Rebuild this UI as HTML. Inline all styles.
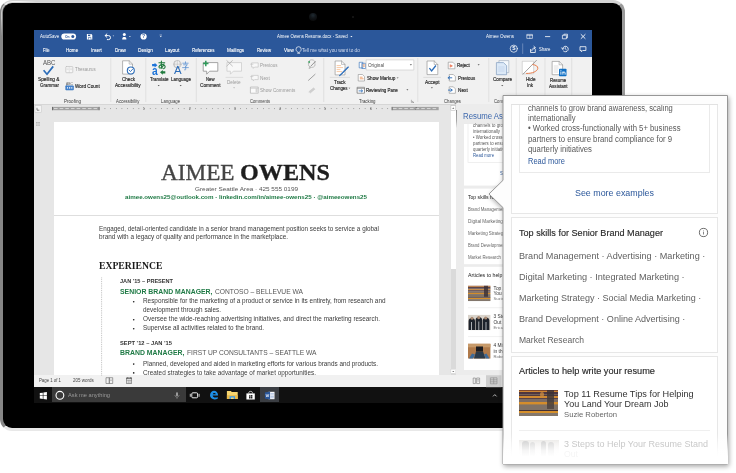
<!DOCTYPE html>
<html><head><meta charset="utf-8"><title>Resume Assistant in Word</title>
<style>
html,body{margin:0;padding:0;}
body{width:736px;height:473px;overflow:hidden;background:#fff;position:relative;font-family:"Liberation Sans",sans-serif;}
.t{position:absolute;white-space:nowrap;line-height:1;transform-origin:0 50%;}
.tx{position:absolute;left:0;top:0;width:736px;height:473px;will-change:transform;}
.a{position:absolute;}
svg{position:absolute;overflow:visible;}
</style></head><body>
<!-- tablet -->
<div class="a" style="left:0;top:0;width:625px;height:431px;box-sizing:border-box;border-style:solid;border-width:3px 3.2px 3.2px 3px;border-color:#d3d3d3 #9b9b9b #e8e8e8 #868686;border-radius:12px;background:#000;"></div>
<div class="a" style="left:0.6px;top:0.6px;width:40px;height:40px;box-sizing:border-box;border-top:1px solid rgba(255,255,255,.75);border-left:1px solid rgba(255,255,255,.55);border-radius:11.5px 0 0 0;-webkit-mask-image:linear-gradient(135deg,#000 0,#000 22%,transparent 45%);"></div>
<!-- camera -->
<div class="a" style="left:308.5px;top:12.5px;width:8px;height:8px;border-radius:50%;background:radial-gradient(circle at 50% 30%,#1f2a31 0,#12161a 40%,#0b0c0d 75%,#000 100%);"></div>
<div class="a" style="left:351.5px;top:15.5px;width:2.5px;height:2.5px;border-radius:50%;background:#1a1a1a;"></div>

<!-- screen -->
<div id="screen" class="a" style="left:32.5px;top:29.5px;width:559.5px;height:373px;background:#e6e6e6;overflow:hidden;">
  <!-- blue title + tabs -->
  <div class="a" style="left:0;top:0;width:100%;height:27px;background:#2b579a;"></div>
  <!-- ribbon -->
  <div class="a" style="left:0;top:27px;width:100%;height:48px;background:#f1f1f1;border-bottom:0.5px solid #d6d6d6;box-sizing:border-box;"></div>
  <!-- page -->
  <div class="a" style="left:21.5px;top:92.5px;width:384.5px;height:260px;background:#fff;"></div>
  <div class="a" style="left:21.5px;top:185.8px;width:384.5px;height:0.8px;background:#dedede;"></div>
  <!-- scrollbar -->
  <div class="a" style="left:423.8px;top:74.5px;width:136px;height:271px;background:#ececec;"></div>
  <div class="a" style="left:418px;top:75px;width:5.2px;height:271px;background:#dadada;"></div>
  <div class="a" style="left:418.2px;top:76.2px;width:4.9px;height:163.3px;background:#fff;"></div>
  <div class="a" style="left:418.2px;top:339.8px;width:4.9px;height:4.2px;background:#fff;"></div>
  <div class="a" style="left:423.5px;top:80px;width:0.8px;height:18px;background:linear-gradient(180deg,#8e8e8e,#a8a8a8 60%,rgba(200,200,200,0));"></div>
  <!-- pane cards -->
  <div class="a" style="left:431.2px;top:94.2px;width:140px;height:246.3px;background:#fff;"></div>
  <!-- status bar -->
  <div class="a" style="left:0;top:345.5px;width:100%;height:12px;background:#f1f1f1;"></div>
  <!-- taskbar -->
  <div class="a" style="left:0;top:357.5px;width:100%;height:16px;background:#111;"></div>
  <div class="a" style="left:19.5px;top:357.5px;width:133.5px;height:15px;background:#3a3a3a;"></div>
  <div class="a" style="left:227.5px;top:357.5px;width:18.5px;height:15px;background:#3a3d42;"></div>
  <div class="a" style="left:0;top:0;width:0.8px;height:100%;background:#000;"></div>
</div>

<!-- icons overlay (page coords) -->
<svg style="left:0;top:0" width="736" height="473" viewBox="0 0 736 473">
 <g fill="none" stroke="#fff" stroke-width="0.8" stroke-linecap="round" stroke-linejoin="round">
  <!-- autosave toggle -->
  <rect x="61.3" y="33.4" width="14.8" height="6.2" rx="3.1" fill="#fff" stroke="none"/>
  <circle cx="72.8" cy="36.5" r="1.5" fill="#2b579a" stroke="none"/>
  <!-- save -->
  <path d="M86.900 34h4.400l1 1v4.600h-5.400z" fill="#fff" stroke="none"/>
  <rect x="88" y="34.600" width="2.800" height="1.500" fill="#2b579a" stroke="none"/>
  <rect x="90" y="34.600" width="0.700" height="1.500" fill="#fff" stroke="none"/>
  <rect x="88" y="37.400" width="3.200" height="2.200" fill="#2b579a" stroke="none"/>
  <rect x="88.500" y="37.900" width="2.200" height="1.700" fill="#fff" stroke="none"/>
  <!-- undo -->
  <path d="M105.2 35.6h3.3a2 2 0 0 1 0 4h-1.2" stroke-width="1"/>
  <path d="M106.9 33.9l-1.8 1.7l1.8 1.7" stroke-width="1"/>
  <path d="M112.6 35.6h1.6l-0.8 1z" fill="#cdd7ea" stroke="none"/>
  <!-- touch -->
  <circle cx="124.3" cy="34.6" r="1.5" fill="#fff" stroke="none"/>
  <path d="M122.2 39.6c0-2 .8-2.6 2.1-2.6s2.1.6 2.1 2.6z" fill="#fff" stroke="none"/>
  <path d="M129 36h1.8l-0.9 1.1z" fill="#fff" stroke="none"/>
  <!-- help -->
  <circle cx="143.6" cy="36.5" r="3.1" fill="#fff" stroke="none"/>
  <!-- qat arrow -->
  <path d="M159.9 36.1h1.8l-0.9 1.1z" fill="#fff" stroke="none"/>
  <path d="M160 35h1.6" stroke-width="0.5"/>
  <!-- title dropdown -->
  <path d="M350.3 36h2.2l-1.1 1.3z" fill="#fff" stroke="none"/>
  <!-- ribbon display -->
  <rect x="527.2" y="34.4" width="5.2" height="4" stroke-width="0.6"/>
  <path d="M527.2 35.500h5.2M529.8 35.500v2.900" stroke-width="0.500"/>
  <!-- min / restore / close -->
  <path d="M545.4 36.6h4.4" stroke-width="0.8"/>
  <rect x="562.8" y="35.2" width="3.6" height="3.6" stroke-width="0.7"/>
  <path d="M563.9 35.2v-1h3.6v3.6h-1" stroke-width="0.7"/>
  <path d="M581.1 34.5l4 4M585.1 34.5l-4 4" stroke-width="0.9"/>
  <!-- lightbulb -->
  <path d="M296.6 52.2c-1.2-1-1.7-1.9-1.7-2.9a2.6 2.6 0 0 1 5.200 0c0 1-.5 1.900-1.700 2.900z" transform="translate(1.1 0)" stroke-width="0.7"/>
  <path d="M297.700 53.300h2" stroke-width="0.7"/>
  <!-- S circle -->
  <circle cx="513.8" cy="48.7" r="3.6" stroke-width="0.7"/>
  <path d="M522.7 43.800v9.700" stroke="#8fa6cf" stroke-width="0.600"/>
  <!-- share -->
  <path d="M530.5 49.500v3h4.800v-3" stroke-width="0.800"/>
  <path d="M531.800 50.800c.2-2 1.200-3 3.200-3.100M533.900 46.300l1.500 1.400l-1.500 1.400" stroke-width="0.800"/>
  <!-- history -->
  <path d="M562.600 49a2.800 2.800 0 1 1 .9 2.100" stroke-width="0.800"/>
  <path d="M561.600 47.800l1 1.500l1.500-.9" stroke-width="0.700"/>
  <path d="M565.400 47.500v1.700l1.100.7" stroke-width="0.600"/>
  <!-- comment -->
  <path d="M580.400 46.700h5.500v3.800h-3.200l-1.300 1.300v-1.300h-1z" stroke-width="0.800"/>
 </g>
</svg>

<!-- ribbon icons (page coords) -->
<svg style="left:0;top:0" width="736" height="473" viewBox="0 0 736 473">
 <!-- separators -->
 <g stroke="#d9d9d9" stroke-width="0.7">
  <path d="M110.8 58v44M145.8 58v44M196.300 58v44M323.700 58v44M417.800 58v44M488.800 58v44M516.200 58v44M545 58v44M571.700 58v44"/>
  <path d="M225.600 77.400h17.500M329.800 77.400h20.200M423.300 77.400h17.700" stroke="#cfcfcf" stroke-width="0.600"/>
 </g>
 <g fill="none" stroke-linecap="round" stroke-linejoin="round">
  <!-- spelling check -->
  <path d="M43.600 70.300l3.400 3.900l6.200-7.800" stroke="#2b6cb8" stroke-width="1.700" stroke-linecap="butt" stroke-linejoin="miter"/>
  <!-- thesaurus (disabled) -->
  <rect x="65.800" y="66.500" width="7" height="6.200" rx="0.600" stroke="#c2c2c2" stroke-width="0.700" fill="#f7f7f7"/>
  <path d="M69.300 66.500v6.200M67 68.200h1.300M67 69.600h1.300M70.500 68.200h1.300M70.500 69.600h1.300" stroke="#cfcfcf" stroke-width="0.500"/>
  <!-- word count -->
  <rect x="65.700" y="85.800" width="7.800" height="4.200" rx="0.500" fill="#4a86cf" stroke="#2b6cb8" stroke-width="0.500"/>
  <path d="M67 87.900h1M69 87.900h1.200M71.200 87.900h1.100" stroke="#fff" stroke-width="1.300" stroke-linecap="butt"/>
  <!-- check accessibility doc -->
  <path d="M123 60.800h6.200l3.300 3.300v10h-9.500z" fill="#fff" stroke="#9a9a9a" stroke-width="0.700"/>
  <path d="M129.200 60.800v3.300h3.300" stroke="#9a9a9a" stroke-width="0.600"/>
  <circle cx="130.800" cy="70.500" r="3.500" fill="#fff" stroke="#2b6cb8" stroke-width="1.100"/>
  <path d="M129 70l1.500 1.600l2.300-2.600" stroke="#2b6cb8" stroke-width="0.900"/>
  <!-- translate -->
  <path d="M152.100 64h2.500v-1.200l2.800 2.350l-2.800 2.350v-1.200h-2.500z" fill="#1e74d8" stroke="none"/>
  <path d="M165.300 71.200h-2.500v-1.200l-2.800 2.350l2.800 2.350v-1.200h2.500z" fill="#1f7a3d" stroke="none"/>
  <g transform="translate(157.9 60.700)" stroke="#1f7a3d" stroke-width="1.100" fill="none"><path d="M1 2.100H6.800"/><path d="M3.500 0.400C3.200 3 3.400 5.600 4.100 7.800"/><path d="M6.100 3.300C5.100 6.600 2.600 8.100 1.300 6.900C0.300 5.600 2.600 3.700 5.100 4C7.600 4.300 8.100 6.900 5.700 8"/></g>
  <!-- language: globe + A + glyph -->
  <circle cx="177.300" cy="64.200" r="3.700" stroke="#ababab" stroke-width="0.600"/>
  <path d="M173.600 64.200h7.400M177.300 60.500v7.400M175.300 61.200c-1.100 2-1.100 4 0 6M179.300 61.200c1.100 2 1.100 4 0 6" stroke="#b5b5b5" stroke-width="0.500"/>
  <path d="M182.800 63.200h5.400M185.500 61.800v1.400M183.600 64.800h3.800l-1.600 1.500M185.700 66.300v3c0 .6-.5.700-1.200.5M182.600 67.600h5.800" stroke="#4a86cf" stroke-width="0.700"/>
  <!-- new comment -->
  <path d="M203.600 62.600h14.200v8.600h-8.200l-2.900 3v-3h-3.100z" fill="#fff" stroke="#8f8f8f" stroke-width="0.800"/>
  <path d="M205.800 60.800v5.400M203.100 63.500h5.400" stroke="#2e9a5a" stroke-width="1.500" stroke-linecap="butt"/>
  <!-- delete comment (disabled) -->
  <path d="M227.300 62.600h14.200v8.600h-8.200l-2.900 3v-3h-3.100z" fill="#f8f8f8" stroke="#c9c9c9" stroke-width="0.700"/>
  <path d="M226.800 60.600l5.600 5.400M232.400 60.600l-5.600 5.400" stroke="#a8a8a8" stroke-width="0.700"/>
  <!-- previous / next / show comments (disabled) -->
  <path d="M252 62.900h6.200v4.200h-3.600l-1.300 1.300v-1.300h-1.300z" fill="#f8f8f8" stroke="#bdbdbd" stroke-width="0.600"/>
  <path d="M252 75.400h6.200v4.200h-3.600l-1.300 1.300v-1.300h-1.300z" fill="#f8f8f8" stroke="#bdbdbd" stroke-width="0.600"/>
  <path d="M250.600 64.200h2.400M250.600 76.600h2.400" stroke="#bdbdbd" stroke-width="0.600"/>
  <rect x="250.800" y="87" width="7.400" height="6.200" fill="#fbfbfb" stroke="#b5b5b5" stroke-width="0.700"/>
  <rect x="255.600" y="88.600" width="2" height="4" fill="#d5d5d5" stroke="none"/>
  <path d="M250.800 88.200h7.400" stroke="#b5b5b5" stroke-width="0.600"/>
  <!-- ink comment / pen / eraser -->
  <path d="M308.600 63.600a3.400 2.700 0 1 0 6.200 0a3.400 2.700 0 1 0-6.200 0M309.600 67l-.6 1.600l1.700-.9" stroke="#9c9c9c" stroke-width="0.600"/>
  <path d="M311 66l4.200-4.400" stroke="#7d7d7d" stroke-width="0.800"/>
  <circle cx="309.200" cy="62" r="0.900" fill="#3aa35f" stroke="none"/>
  <path d="M308.500 80.300l6.600-6" stroke="#8c8c8c" stroke-width="0.800"/>
  <path d="M309 91.600l4.600-3.800l1.300 1.400l-4.600 3.800z" fill="#cfcfcf" stroke="#c2c2c2" stroke-width="0.400"/>
  <!-- track changes -->
  <path d="M335.500 61h6l3.500 3.400v10.500h-9.500z" fill="#fff" stroke="#9a9a9a" stroke-width="0.700"/>
  <path d="M341.500 61v3.400h3.500" stroke="#9a9a9a" stroke-width="0.600"/>
  <path d="M337 65.600h3.600M337 67.600h5.600M337 69.600h3M337 71.600h4.600" stroke="#f0a66a" stroke-width="0.600"/>
  <path d="M347.800 66.800l-7.200 7.400l-1.400 1.700l2-1.100l7.200-7.400z" fill="#2b6cb8" stroke="#2b6cb8" stroke-width="0.700"/>
  <!-- display for review icon -->
  <path d="M359.600 62.300h3.200v5.600h-3.200zM362.200 63.300h3.400v5.200h-3.400z" fill="#fff" stroke="#2b6cb8" stroke-width="0.600"/>
  <path d="M363 64.800h1.800M363 66.200h1.800" stroke="#e8803a" stroke-width="0.600"/>
  <rect x="366.500" y="59.900" width="47.300" height="10.100" fill="#fff" stroke="#c6c6c6" stroke-width="0.600"/>
  <path d="M409.800 64.300h2.200l-1.100 1.300z" fill="#555" stroke="none"/>
  <!-- show markup -->
  <path d="M358.600 74.500h3.800l2.100 2.100v4.400h-5.900z" fill="#fff" stroke="#8f8f8f" stroke-width="0.600"/>
  <path d="M360.200 77.200h2M360.200 78.800h3" stroke="#e8803a" stroke-width="0.700"/>
  <path d="M396.600 77.400h2l-1 1.200z" fill="#555" stroke="none"/>
  <!-- reviewing pane -->
  <rect x="357.500" y="87.300" width="7" height="5.900" fill="#fff" stroke="#6d6d6d" stroke-width="0.700"/>
  <path d="M357.500 88.600h7" stroke="#6d6d6d" stroke-width="0.600"/>
  <path d="M359 90.900h3.400M361.300 89.800l1.200 1.100l-1.200 1.100" stroke="#2b6cb8" stroke-width="0.800"/>
  <path d="M406.400 89.300h2l-1 1.200z" fill="#555" stroke="none"/>
  <path d="M411.400 100.200v2.200h2.200M412.300 101.300l1.300 1.100" stroke="#777" stroke-width="0.500"/>
  <!-- accept -->
  <path d="M427.400 61h6.800l3.600 3.500v10.100h-10.400z" fill="#fff" stroke="#9a9a9a" stroke-width="0.700"/>
  <path d="M434.200 61v3.500h3.600" stroke="#9a9a9a" stroke-width="0.600"/>
  <path d="M429.400 68.200l2.200 2.700l4.300-5.400" stroke="#2b6cb8" stroke-width="1.300" stroke-linecap="butt" stroke-linejoin="miter"/>
  <path d="M430.900 87.300h2l-1 1.200z" fill="#555" stroke="none"/>
  <!-- reject / previous / next docs -->
  <path d="M448.600 62.200h4.200l2.100 2.100v4.500h-6.300z" fill="#fff" stroke="#8f8f8f" stroke-width="0.600"/>
  <path d="M450.300 64.700l2.200 1.200l-2.200 1.200z" fill="#e8603a" stroke="#e8603a" stroke-width="0.400"/>
  <path d="M477.600 64.300h2.100l-1.050 1.300z" fill="#555" stroke="none"/>
  <path d="M449.600 74.500h3.700l2.100 2.100v4.400h-5.800z" fill="#fff" stroke="#8f8f8f" stroke-width="0.600"/>
  <path d="M448.200 77.800h3.600M449.600 76.500l-1.500 1.300l1.500 1.300" stroke="#2b6cb8" stroke-width="0.900"/>
  <path d="M449.600 86.800h3.700l2.100 2.100v4.400h-5.800z" fill="#fff" stroke="#8f8f8f" stroke-width="0.600"/>
  <path d="M448.400 90.100h3.600M450.700 88.800l1.500 1.300l-1.500 1.300" stroke="#2b6cb8" stroke-width="0.900"/>
  <!-- compare -->
  <path d="M499.300 60.600h9.500v12h-9.500z" fill="#f4f8fc" stroke="#9aa9bb" stroke-width="0.600"/>
  <path d="M496.800 62.600h6.600l3.200 3v9.100h-9.800z" fill="#dce9f7" stroke="#7f9cc0" stroke-width="0.700"/>
  <path d="M498.600 67h5.600M498.600 69h5.600M498.600 71h5.600" stroke="#b9cfe9" stroke-width="0.600"/>
  <path d="M501.200 85h2.100l-1.050 1.300z" fill="#555" stroke="none"/>
  <!-- hide ink -->
  <path d="M522.600 61.300h11v12.500h-11z" fill="#fff" stroke="#b9b9b9" stroke-width="0.500"/>
  <path d="M536.400 60.400l-13.400 13.800" stroke="#7a7a7a" stroke-width="0.700"/>
  <path d="M532.800 64.600c3.300.3 5.200 1.800 5 3.800c-.3 2.800-5.300 5.200-11.300 5" stroke="#e8703a" stroke-width="0.900"/>
  <!-- resume assistant -->
  <path d="M552.500 61.400h6.600l3.500 3.400v9.900h-10.100z" fill="#fff" stroke="#9a9a9a" stroke-width="0.700"/>
  <path d="M559.100 61.400v3.400h3.500" stroke="#9a9a9a" stroke-width="0.600"/>
  <path d="M554.200 66h4M554.200 68h4M554.200 70h3.400M554.200 72h3.400" stroke="#c9c9c9" stroke-width="0.600"/>
  <rect x="559" y="68.800" width="7.500" height="7.400" rx="0.800" fill="#0f6fc4" stroke="none"/>
  <path d="M560.900 71.500v3.200M562.900 74.700v-3.200M562.900 73c0-1.300 2.200-1.600 2.200 0v1.700" stroke="#fff" stroke-width="0.900" stroke-linecap="butt"/>
  <circle cx="560.900" cy="70.300" r="0.550" fill="#fff" stroke="none"/>
  <!-- small dropdown arrows under translate/language/delete -->
  <path d="M157.700 85h2l-1 1.200zM179.700 85h2l-1 1.200z" fill="#555" stroke="none"/>
  <path d="M233.100 87.300h2l-1 1.200z" fill="#b5b5b5" stroke="none"/>
  <path d="M348.500 87.700h1.800l-.9 1.100z" fill="#555" stroke="none"/>
 </g>
</svg>

<!-- ruler, doc furniture, status/taskbar icons, pane (page coords) -->
<svg style="left:0;top:0" width="736" height="473" viewBox="0 0 736 473">
 <!-- ruler -->
 <rect x="35" y="105.700" width="6.200" height="6.500" fill="#f7f7f7" stroke="#c4c4c4" stroke-width="0.500"/>
 <path d="M37 107.800v2.400h2.400" fill="none" stroke="#555" stroke-width="0.700"/>
 <rect x="52.200" y="106.900" width="47.300" height="3.300" fill="#a2a2a2"/><rect x="52.200" y="106.900" width="0.800" height="3.300" fill="#5a5a5a"/><rect x="98.700" y="106.900" width="0.800" height="3.300" fill="#6a6a6a"/>
 <rect x="391.700" y="106.900" width="47" height="3.300" fill="#a2a2a2"/><rect x="391.700" y="106.900" width="0.800" height="3.300" fill="#6a6a6a"/>
 <path d="M54 108.550h44" stroke="#d9d9d9" stroke-width="1" stroke-dasharray="3.600 2.050"/>
 <path d="M393 108.550h44" stroke="#d9d9d9" stroke-width="1" stroke-dasharray="3.600 2.050"/>
 <path d="M104.650 108.550h286" stroke="#6a6a6a" stroke-width="0.900" stroke-dasharray="0.600 5.056"/>
 <!-- nav icon -->
 <path d="M36 121.900h1.700v1h-1.700zM38.200 121.900h1.700v1h-1.700zM36 123.400h1.700v1h-1.700zM38.200 123.400h1.700v1h-1.700zM36 124.900h1.700v.8h-1.700zM38.200 124.900h1.700v.8h-1.700z" fill="#b5b5b5"/>
 <!-- dotted vertical line in doc -->
 <path d="M101.600 277.500v98" stroke="#9a9a9a" stroke-width="0.700" stroke-dasharray="0.800 1"/>
 <!-- bullets -->
 <circle cx="133.700" cy="301.8" r="0.800" fill="#1a1a1a"/><circle cx="133.700" cy="319.8" r="0.800" fill="#1a1a1a"/><circle cx="133.700" cy="328.8" r="0.800" fill="#1a1a1a"/><circle cx="133.700" cy="364.1" r="0.800" fill="#1a1a1a"/><circle cx="133.700" cy="372.9" r="0.800" fill="#1a1a1a"/>
 <!-- scrollbar arrows -->
 <rect x="450.900" y="105.600" width="4.700" height="5" fill="#fff" stroke="#b3b3b3" stroke-width="0.500"/>
 <path d="M452.200 108.700l1.050-1.300l1.050 1.300z" fill="#555"/>
 <rect x="450.900" y="369.400" width="4.700" height="4" fill="#fff" stroke="#c9c9c9" stroke-width="0.400"/>
 <path d="M452.200 370.900l1.050 1.200l1.050-1.200z" fill="#555"/>
 <!-- status bar icons -->
 <g fill="none" stroke="#666" stroke-width="0.600">
  <path d="M106 377.700h3.300v5.800h-3.300zM109.300 377.700h3.400v5.800h-3.400z"/>
  <path d="M110.300 379.500l1.400 1.400M111.700 379.500l-1.400 1.400" stroke="#888" stroke-width="0.500"/>
  <rect x="126.500" y="378.600" width="5.200" height="4.800"/>
  <path d="M126.500 380.200h5.200M128.200 380.200v3.200M130 380.200v3.200" stroke-width="0.500"/>
  <rect x="126.500" y="377.300" width="2.200" height="1.300" fill="#555" stroke="none"/>
  <rect x="129.400" y="377.300" width="2.300" height="1.300" fill="#555" stroke="none"/>
  <!-- right view icons -->
  <rect x="486" y="375.200" width="15.500" height="12" fill="#cfcfcf" stroke="none"/>
  <path d="M473.200 378h2.200v5.600h-2.200zM476.600 378h3v5.600h-3zM477.400 379.600h1.400M477.400 381h1.400" stroke="#777" stroke-width="0.600"/>
  <path d="M490.400 377.800h6.600v6h-6.600zM490.400 379.800h6.600M490.400 381.800h6.600M493.700 377.800v6" stroke="#8a8a8a" stroke-width="0.600"/>
 </g>
 <!-- taskbar icons -->
 <g>
  <path d="M39.800 393.100l3-.45v2.850h-3zM43.400 392.550l3.500-.55v3.500h-3.500zM39.800 396.100h3v2.850l-3-.45zM43.400 396.100h3.500v3.500l-3.500-.55z" fill="#fff"/>
  <circle cx="59.900" cy="395.300" r="3.900" fill="none" stroke="#fff" stroke-width="1.100"/>
  <!-- mic -->
  <rect x="176" y="392.200" width="2" height="4" rx="1" fill="#9c9c9c"/>
  <path d="M174.900 395c0 2.800 4.200 2.800 4.200 0M177 397.200v1.600" fill="none" stroke="#9c9c9c" stroke-width="0.600"/>
  <!-- task view -->
  <rect x="191.800" y="392.800" width="5.800" height="5" rx="1" fill="none" stroke="#fff" stroke-width="0.900"/>
  <path d="M190.300 393.800v3M199.100 393.800v3" stroke="#fff" stroke-width="0.800"/>
  <!-- edge -->
  <path d="M210 395.600c0-6.400 8.200-6.200 8.100 0h-5.400c.2 2.200 3 2.500 5 1.400v1.700c-3.500 1.700-7.600.3-7.700-3.100zM212.800 394.300h3c-.1-1.900-2.800-1.900-3 0z" fill="#1e8fe6" fill-rule="evenodd"/>
  <!-- folder -->
  <path d="M226.900 391h4l.9 1h5.900v7h-10.800z" fill="#f7d56f"/>
  <path d="M226.900 395.200h10.800v3.800h-10.800z" fill="#e9b94a"/>
  <path d="M229.600 396.200h5.400v2.800h-5.400z" fill="#3c9be9"/>
  <path d="M230.900 397.500h2.800v1.500h-2.800z" fill="#f7d56f"/>
  <!-- store -->
  <path d="M246.400 393.400h8.400v6.100h-8.400z" fill="#fff"/>
  <path d="M248.800 393.400v-.9c0-1.500 3.600-1.500 3.600 0v.9" fill="none" stroke="#fff" stroke-width="0.700"/>
  <path d="M249 395.300h1.400v1.400h-1.400zM250.800 395.100h1.600v1.600h-1.600zM249 397h1.400v1.400h-1.400zM250.800 397h1.600v1.600h-1.600z" fill="#222"/>
  <!-- word -->
  <path d="M268.500 391.800h6v7.400h-6z" fill="#fff"/>
  <path d="M270.500 393.400h3.400M270.500 394.900h3.400M270.500 396.400h3.400M270.500 397.800h3.400" stroke="#7f9cd0" stroke-width="0.600"/>
  <path d="M264.900 392.400l5.200-1v8.200l-5.200-1z" fill="#2b579a"/>
  <path d="M266 394l.7 3l.7-2.400l.7 2.400l.7-3" fill="none" stroke="#fff" stroke-width="0.550"/>
  <!-- tray caret -->
  <path d="M493 396.400l1.800-1.800l1.800 1.800" fill="none" stroke="#ddd" stroke-width="0.800"/>
 </g>
 <!-- pane: card separators & nested box -->
 <g>
  <rect x="463.700" y="185.600" width="128" height="3" fill="#ececec"/>
  <rect x="463.700" y="264.200" width="128" height="2.600" fill="#ececec"/>
  <rect x="468" y="118" width="110" height="44.300" fill="none" stroke="#e4e4e4" stroke-width="0.600"/>
  <rect x="463.700" y="116" width="128" height="7.700" fill="#ececec"/>
  <path d="M468 307.700h110M468 336.600h110" stroke="#e6e6e6" stroke-width="0.600"/>
 </g>
 <!-- pane thumbs -->
 <g>
  <rect x="468" y="285.80" width="22.4" height="0.73" fill="#8a4e2c"/>
  <rect x="468" y="286.48" width="22.4" height="0.67" fill="#ee9a32"/>
  <rect x="468" y="287.10" width="22.4" height="1.01" fill="#4a3540"/>
  <rect x="468" y="288.07" width="22.4" height="0.73" fill="#756a66"/>
  <rect x="468" y="288.75" width="22.4" height="0.56" fill="#4e3a42"/>
  <rect x="468" y="289.26" width="22.4" height="1.01" fill="#f0a030"/>
  <rect x="468" y="290.22" width="22.4" height="1.01" fill="#57454e"/>
  <rect x="468" y="291.19" width="22.4" height="1.75" fill="#857a70"/>
  <rect x="468" y="292.89" width="22.4" height="1.24" fill="#f5a528"/>
  <rect x="468" y="294.08" width="22.4" height="3.40" fill="#8a8272"/>
  <rect x="468" y="297.43" width="22.4" height="0.62" fill="#3c2c32"/>
  <rect x="468" y="297.99" width="22.4" height="1.18" fill="#f8a828"/>
  <rect x="468" y="299.13" width="22.4" height="1.92" fill="#8e887c"/>
  <rect x="484" y="285.8" width="4" height="11" fill="#2e2a33" opacity=".8"/>
  <rect x="468" y="285.8" width="22.4" height="15.2" fill="#5f3c37" opacity=".22"/>
  <rect x="468" y="314.900" width="22.400" height="15.200" fill="#d9d3cb"/>
  <path d="M468.600 330.100v-9c0-4 6.400-4 6.400 0v9zM475.600 330.100v-10c0-4 6.600-4 6.600 0v10zM482.800 330.100v-9.500c0-4 6.600-4 6.600 0v9.500z" fill="#1d222b"/>
  <path d="M471.500 322v8M478.800 321.500v8.500M486 322v8" stroke="#cfd3d8" stroke-width="0.800"/>
  <circle cx="472" cy="318.300" r="1.500" fill="#a98a72"/><circle cx="478.700" cy="317.600" r="1.600" fill="#a98a72"/><circle cx="485.700" cy="318" r="1.600" fill="#a98a72"/>
  <rect x="468" y="343.800" width="22.400" height="14.700" fill="#b07a4a"/>
  <path d="M468 343.800h22.400v3.500h-22.400z" fill="#c79a6a"/>
  <path d="M474 358.500l2-7h7l2.500 7z" fill="#2a3a4a"/>
  <rect x="476" y="346.500" width="7" height="5" fill="#1b1b1f"/>
  <path d="M469 358.500l3-5l3 1l-2 4zM489.500 358.500l-3-5l-2.500 1l2 4z" fill="#3c6a9a"/>
 </g>
</svg>

<div class="tx">
<span class="t" style="font-size:5.5px;color:#fff;top:34px;left:39.80px;transform:scaleX(0.8047);">AutoSave</span>
<span class="t" style="font-size:5.5px;color:#fff;top:34px;left:277.40px;transform:scaleX(0.7855);">Aimee Owens Resume.docx - Saved</span>
<span class="t" style="font-size:5.5px;color:#fff;top:34px;left:486.00px;transform:scaleX(0.8175);">Aimee Owens</span>
<span class="t" style="font-size:5.3px;color:#fff;top:48px;-webkit-text-stroke:0.1px #fff;left:43.10px;transform:scaleX(0.7722);">File</span>
<span class="t" style="font-size:5.3px;color:#fff;top:48px;-webkit-text-stroke:0.1px #fff;left:65.80px;transform:scaleX(0.8628);">Home</span>
<span class="t" style="font-size:5.3px;color:#fff;top:48px;-webkit-text-stroke:0.1px #fff;left:91.20px;transform:scaleX(0.8151);">Insert</span>
<span class="t" style="font-size:5.3px;color:#fff;top:48px;-webkit-text-stroke:0.1px #fff;left:114.75px;transform:scaleX(0.8808);">Draw</span>
<span class="t" style="font-size:5.3px;color:#fff;top:48px;-webkit-text-stroke:0.1px #fff;left:137.75px;transform:scaleX(0.9030);">Design</span>
<span class="t" style="font-size:5.3px;color:#fff;top:48px;-webkit-text-stroke:0.1px #fff;left:165.00px;transform:scaleX(0.8927);">Layout</span>
<span class="t" style="font-size:5.3px;color:#fff;top:48px;-webkit-text-stroke:0.1px #fff;left:191.55px;transform:scaleX(0.8304);">References</span>
<span class="t" style="font-size:5.3px;color:#fff;top:48px;-webkit-text-stroke:0.1px #fff;left:226.70px;transform:scaleX(0.8849);">Mailings</span>
<span class="t" style="font-size:5.3px;color:#fff;top:48px;-webkit-text-stroke:0.1px #fff;left:257.10px;transform:scaleX(0.8058);">Review</span>
<span class="t" style="font-size:5.3px;color:#fff;top:48px;-webkit-text-stroke:0.1px #fff;left:284.10px;transform:scaleX(0.8604);">View</span>
<span class="t" style="font-size:5.3px;color:#d5def0;top:48px;left:302.40px;transform:scaleX(0.8841);">Tell me what you want to do</span>
<span class="t" style="font-size:5.6px;color:#fff;top:47px;left:539.40px;transform:scaleX(0.7565);">Share</span>
<span class="t" style="font-size:4.2px;color:#2b579a;top:35px;font-weight:bold;left:65.00px;transform:scaleX(0.7893);">On</span>
<span class="t" style="font-size:6.3px;color:#555;top:60px;left:42.75px;transform:scaleX(0.9650);">ABC</span>
<span class="t" style="font-size:5.4px;color:#2b2b2b;top:77px;-webkit-text-stroke:0.18px #2b2b2b;left:38.25px;transform:scaleX(0.8855);">Spelling &amp;</span>
<span class="t" style="font-size:5.4px;color:#2b2b2b;top:83px;-webkit-text-stroke:0.18px #2b2b2b;left:39.50px;transform:scaleX(0.8346);">Grammar</span>
<span class="t" style="font-size:5.4px;color:#9a9a9a;top:67px;left:75.30px;transform:scaleX(0.8128);">Thesaurus</span>
<span class="t" style="font-size:5.4px;color:#2b2b2b;top:84px;-webkit-text-stroke:0.18px #2b2b2b;left:75.30px;transform:scaleX(0.8615);">Word Count</span>
<span class="t" style="font-size:5.4px;color:#383838;top:99px;left:63.50px;transform:scaleX(0.8467);">Proofing</span>
<span class="t" style="font-size:5.4px;color:#2b2b2b;top:77px;-webkit-text-stroke:0.18px #2b2b2b;left:121.50px;transform:scaleX(0.8507);">Check</span>
<span class="t" style="font-size:5.4px;color:#2b2b2b;top:83px;-webkit-text-stroke:0.18px #2b2b2b;left:115.25px;transform:scaleX(0.8685);">Accessibility</span>
<span class="t" style="font-size:5.4px;color:#383838;top:99px;left:116.25px;transform:scaleX(0.8004);">Accessibility</span>
<span class="t" style="font-size:5.4px;color:#2b2b2b;top:77px;-webkit-text-stroke:0.18px #2b2b2b;left:149.75px;transform:scaleX(0.8303);">Translate</span>
<span class="t" style="font-size:5.4px;color:#2b2b2b;top:77px;-webkit-text-stroke:0.18px #2b2b2b;left:170.50px;transform:scaleX(0.8339);">Language</span>
<span class="t" style="font-size:5.4px;color:#383838;top:99px;left:160.90px;transform:scaleX(0.7922);">Language</span>
<span class="t" style="font-size:5.4px;color:#2b2b2b;top:77px;-webkit-text-stroke:0.18px #2b2b2b;left:206.35px;transform:scaleX(0.7873);">New</span>
<span class="t" style="font-size:5.4px;color:#2b2b2b;top:83px;-webkit-text-stroke:0.18px #2b2b2b;left:200.35px;transform:scaleX(0.8770);">Comment</span>
<span class="t" style="font-size:5.4px;color:#9a9a9a;top:80px;left:227.25px;transform:scaleX(0.8657);">Delete</span>
<span class="t" style="font-size:5.4px;color:#9a9a9a;top:63px;left:260.00px;transform:scaleX(0.8292);">Previous</span>
<span class="t" style="font-size:5.4px;color:#9a9a9a;top:76px;left:260.00px;transform:scaleX(0.8834);">Next</span>
<span class="t" style="font-size:5.4px;color:#9a9a9a;top:88px;left:260.00px;transform:scaleX(0.8600);">Show Comments</span>
<span class="t" style="font-size:5.4px;color:#383838;top:99px;left:249.50px;transform:scaleX(0.7674);">Comments</span>
<span class="t" style="font-size:5.4px;color:#2b2b2b;top:80px;-webkit-text-stroke:0.18px #2b2b2b;left:334.25px;transform:scaleX(0.8659);">Track</span>
<span class="t" style="font-size:5.4px;color:#2b2b2b;top:86px;-webkit-text-stroke:0.18px #2b2b2b;left:330.05px;transform:scaleX(0.8104);">Changes</span>
<span class="t" style="font-size:5.4px;color:#4a4a4a;top:63px;left:368.00px;transform:scaleX(0.8612);">Original</span>
<span class="t" style="font-size:5.4px;color:#2b2b2b;top:76px;-webkit-text-stroke:0.18px #2b2b2b;left:367.20px;transform:scaleX(0.8614);">Show Markup</span>
<span class="t" style="font-size:5.4px;color:#2b2b2b;top:88px;-webkit-text-stroke:0.18px #2b2b2b;left:366.40px;transform:scaleX(0.8160);">Reviewing Pane</span>
<span class="t" style="font-size:5.4px;color:#383838;top:99px;left:359.15px;transform:scaleX(0.8055);">Tracking</span>
<span class="t" style="font-size:5.4px;color:#2b2b2b;top:80px;-webkit-text-stroke:0.18px #2b2b2b;left:424.75px;transform:scaleX(0.8796);">Accept</span>
<span class="t" style="font-size:5.4px;color:#2b2b2b;top:63px;-webkit-text-stroke:0.18px #2b2b2b;left:457.20px;transform:scaleX(0.8376);">Reject</span>
<span class="t" style="font-size:5.4px;color:#2b2b2b;top:76px;-webkit-text-stroke:0.18px #2b2b2b;left:458.30px;transform:scaleX(0.8197);">Previous</span>
<span class="t" style="font-size:5.4px;color:#2b2b2b;top:88px;-webkit-text-stroke:0.18px #2b2b2b;left:458.30px;transform:scaleX(0.8744);">Next</span>
<span class="t" style="font-size:5.4px;color:#383838;top:99px;left:444.10px;transform:scaleX(0.7873);">Changes</span>
<span class="t" style="font-size:5.4px;color:#2b2b2b;top:77px;-webkit-text-stroke:0.18px #2b2b2b;left:492.70px;transform:scaleX(0.8569);">Compare</span>
<span class="t" style="font-size:5.4px;color:#383838;top:99px;left:493.70px;transform:scaleX(0.7893);">Compare</span>
<span class="t" style="font-size:5.4px;color:#2b2b2b;top:77px;-webkit-text-stroke:0.18px #2b2b2b;left:525.65px;transform:scaleX(0.8563);">Hide</span>
<span class="t" style="font-size:5.4px;color:#2b2b2b;top:83px;-webkit-text-stroke:0.18px #2b2b2b;left:527.40px;transform:scaleX(0.8330);">Ink</span>
<span class="t" style="font-size:5.4px;color:#2b2b2b;top:78px;-webkit-text-stroke:0.18px #2b2b2b;left:550.10px;transform:scaleX(0.8068);">Resume</span>
<span class="t" style="font-size:5.4px;color:#2b2b2b;top:84px;-webkit-text-stroke:0.18px #2b2b2b;left:548.70px;transform:scaleX(0.8503);">Assistant</span>
<span class="t" style="font-size:12.8px;color:#1e74d8;top:65px;font-weight:bold;left:151.75px;transform:scaleX(0.8000);">a</span>
<span class="t" style="font-size:10.8px;color:#2b6cb8;top:65px;left:173.90px;transform:scaleX(1.0551);">A</span>
<span class="t" style="font-size:3.6px;color:#555;top:83px;left:66.20px;transform:scaleX(0.9201);">ABC</span>
<span class="t" style="font-size:5px;color:#2b579a;top:34px;font-weight:bold;left:142.07px;transform:scaleX(1.0000);">?</span>
<span class="t" style="font-size:5px;color:#fff;top:46px;font-weight:bold;left:512.13px;transform:scaleX(1.0000);">S</span>
<span class="t" style="font-size:3.6px;color:#444;top:108px;left:143.35px;transform:scaleX(0.9000);">1</span>
<span class="t" style="font-size:3.6px;color:#444;top:108px;left:188.60px;transform:scaleX(0.9000);">2</span>
<span class="t" style="font-size:3.6px;color:#444;top:108px;left:233.85px;transform:scaleX(0.9000);">3</span>
<span class="t" style="font-size:3.6px;color:#444;top:108px;left:279.10px;transform:scaleX(0.9000);">4</span>
<span class="t" style="font-size:3.6px;color:#444;top:108px;left:324.35px;transform:scaleX(0.9000);">5</span>
<span class="t" style="font-size:3.6px;color:#444;top:108px;left:369.60px;transform:scaleX(0.9000);">6</span>
<span class="t" style="font-size:3.6px;color:#444;top:108px;left:414.85px;transform:scaleX(0.9000);">7</span>
<span class="t" style="font-size:23.5px;color:#444;top:161px;font-family:'Liberation Serif', serif;-webkit-text-stroke:0.35px #444;left:161.20px;transform:scaleX(0.9878);">AIMEE</span>
<span class="t" style="font-size:23.5px;color:#1e1e1e;top:161px;font-family:'Liberation Serif', serif;font-weight:bold;-webkit-text-stroke:0.3px #1e1e1e;left:240.00px;transform:scaleX(1.0286);">OWENS</span>
<span class="t" style="font-size:5.4px;color:#555;top:187px;left:194.50px;transform:scaleX(1.1850);">Greater Seattle Area  · 425 555 0199</span>
<span class="t" style="font-size:5.9px;color:#1f7a45;top:195px;font-weight:bold;left:125.00px;transform:scaleX(1.0529);">aimee.owens25@outlook.com · linkedin.com/in/aimee-owens25 · @aimeeowens25</span>
<span class="t" style="font-size:6.3px;color:#3a3a3a;top:226px;left:99.00px;transform:scaleX(1.0036);">Engaged, detail-oriented candidate in a senior brand management position seeks to service a global</span>
<span class="t" style="font-size:6.3px;color:#3a3a3a;top:234px;left:99.00px;transform:scaleX(1.0188);">brand with a legacy of quality and performance in the marketplace.</span>
<span class="t" style="font-size:9.4px;color:#1a1a1a;top:262px;font-family:'Liberation Serif', serif;font-weight:bold;left:99.00px;transform:scaleX(1.0330);">EXPERIENCE</span>
<span class="t" style="font-size:5.8px;color:#333;top:279px;font-weight:bold;left:120.00px;transform:scaleX(0.9620);">JAN ’15 – PRESENT</span>
<span class="t" style="font-size:7.2px;color:#1f7a45;top:288px;font-weight:bold;left:120.00px;transform:scaleX(0.9572);">SENIOR BRAND MANAGER,</span>
<span class="t" style="font-size:7.2px;color:#555;top:288px;left:214.50px;transform:scaleX(0.9295);">CONTOSO – BELLEVUE WA</span>
<span class="t" style="font-size:6.3px;color:#3a3a3a;top:298px;left:142.50px;transform:scaleX(1.0149);">Responsible for the marketing of a product or service in its entirety, from research and</span>
<span class="t" style="font-size:6.3px;color:#3a3a3a;top:307px;left:142.50px;transform:scaleX(1.0081);">development through sales.</span>
<span class="t" style="font-size:6.3px;color:#3a3a3a;top:316px;left:142.50px;transform:scaleX(1.0121);">Oversee the wide-reaching advertising initiatives, and direct the marketing research.</span>
<span class="t" style="font-size:6.3px;color:#3a3a3a;top:325px;left:142.50px;transform:scaleX(1.0078);">Supervise all activities related to the brand.</span>
<span class="t" style="font-size:5.8px;color:#333;top:341px;font-weight:bold;left:120.00px;transform:scaleX(0.9899);">SEPT ’12 – JAN ’15</span>
<span class="t" style="font-size:7.2px;color:#1f7a45;top:349px;font-weight:bold;left:120.00px;transform:scaleX(0.9613);">BRAND MANAGER,</span>
<span class="t" style="font-size:7.2px;color:#555;top:349px;left:186.50px;transform:scaleX(0.9273);">FIRST UP CONSULTANTS – SEATTLE WA</span>
<span class="t" style="font-size:6.3px;color:#3a3a3a;top:361px;left:142.50px;transform:scaleX(1.0115);">Planned, developed and aided in marketing efforts for various brands and products.</span>
<span class="t" style="font-size:6.3px;color:#3a3a3a;top:370px;left:142.50px;transform:scaleX(1.0127);">Created strategies to take advantage of market opportunities.</span>
<span class="t" style="font-size:4.6px;color:#444;top:379px;left:38.80px;transform:scaleX(0.9362);">Page 1 of 1</span>
<span class="t" style="font-size:4.6px;color:#444;top:379px;left:73.00px;transform:scaleX(0.9810);">205 words</span>
<span class="t" style="font-size:6px;color:#9a9a9a;top:392px;left:68.00px;transform:scaleX(0.9468);">Ask me anything</span>
<span class="t" style="font-size:9.7px;color:#3d68ad;top:111px;left:463.20px;transform:scaleX(0.8060);">Resume Assistant</span>
<span class="t" style="font-size:4.9px;color:#555;top:124px;left:473.00px;transform:scaleX(0.8964);">channels to grow brand awareness</span>
<span class="t" style="font-size:4.9px;color:#555;top:130px;left:473.00px;transform:scaleX(0.8944);">internationally</span>
<span class="t" style="font-size:4.9px;color:#555;top:136px;left:473.00px;transform:scaleX(0.8985);">• Worked cross-functionally</span>
<span class="t" style="font-size:4.9px;color:#555;top:142px;left:473.00px;transform:scaleX(0.8775);">partners to ensure brand</span>
<span class="t" style="font-size:4.9px;color:#555;top:148px;left:473.00px;transform:scaleX(0.8885);">quarterly initiatives</span>
<span class="t" style="font-size:4.9px;color:#2b579a;top:154px;left:473.00px;transform:scaleX(0.8677);">Read more</span>
<span class="t" style="font-size:5.2px;color:#2b579a;top:171px;left:500.20px;transform:scaleX(0.8889);">See more</span>
<span class="t" style="font-size:5.2px;color:#222;top:195px;left:468.00px;transform:scaleX(0.9781);">Top skills for Senior</span>
<span class="t" style="font-size:4.9px;color:#666;top:208px;left:468.00px;transform:scaleX(0.8844);">Brand Management</span>
<span class="t" style="font-size:4.9px;color:#666;top:220px;left:468.00px;transform:scaleX(0.9605);">Digital Marketing</span>
<span class="t" style="font-size:4.9px;color:#666;top:232px;left:468.00px;transform:scaleX(0.9136);">Marketing Strategy</span>
<span class="t" style="font-size:4.9px;color:#666;top:244px;left:468.00px;transform:scaleX(0.8789);">Brand Development</span>
<span class="t" style="font-size:4.9px;color:#666;top:256px;left:468.00px;transform:scaleX(0.8859);">Market Research</span>
<span class="t" style="font-size:5.2px;color:#222;top:273px;left:468.00px;transform:scaleX(1.0125);">Articles to help write</span>
<span class="t" style="font-size:4.8px;color:#333;top:287px;left:493.5px;">Top 11</span>
<span class="t" style="font-size:4.8px;color:#333;top:292px;left:493.5px;">You L</span>
<span class="t" style="font-size:4.2px;color:#777;top:297px;left:493.5px;">Suzie</span>
<span class="t" style="font-size:4.8px;color:#333;top:315px;left:493.5px;">3 Steps</span>
<span class="t" style="font-size:4.8px;color:#333;top:321px;left:493.5px;">Out</span>
<span class="t" style="font-size:4.2px;color:#777;top:326px;left:493.5px;">Erica</span>
<span class="t" style="font-size:4.8px;color:#333;top:344px;left:493.5px;">4 Mis</span>
<span class="t" style="font-size:4.8px;color:#333;top:350px;left:493.5px;">in th</span>
<span class="t" style="font-size:4.2px;color:#777;top:355px;left:493.5px;">Robe</span>
</div>
<!-- popup -->
<svg style="left:0;top:0" width="736" height="473" viewBox="0 0 736 473">
  <defs><filter id="ps" x="-10%" y="-10%" width="120%" height="120%"><feGaussianBlur in="SourceAlpha" stdDeviation="2.6"/><feOffset dx="0.8" dy="1.5"/><feComponentTransfer><feFuncA type="linear" slope="0.36"/></feComponentTransfer><feMerge><feMergeNode/><feMergeNode in="SourceGraphic"/></feMerge></filter></defs>
  <path d="M503 95.5H727.5V464H503V207.6L489 194L503 180.3Z" fill="#fdfdfd" stroke="#8c8c8c" stroke-width="0.9" filter="url(#ps)"/>
</svg>
<div id="popup" class="a" style="left:503px;top:96px;width:224.5px;height:368px;overflow:hidden;">
  <!-- card1 -->
  <div class="a" style="left:7.7px;top:8px;width:207.7px;height:109.6px;background:#fff;border:0.8px solid #e7e7e7;box-sizing:border-box;"></div>
  <div class="a" style="left:15.6px;top:8px;width:191.3px;height:69.4px;background:#fff;border:0.8px solid #eaeaea;border-top:none;box-sizing:border-box;"></div>
  <!-- card2 -->
  <div class="a" style="left:7.7px;top:120.8px;width:207.7px;height:136.4px;background:#fff;border:0.8px solid #e7e7e7;box-sizing:border-box;"></div>
  <!-- card3 -->
  <div class="a" style="left:7.7px;top:260.4px;width:207.7px;height:120px;background:#fff;border:0.8px solid #e7e7e7;box-sizing:border-box;"></div>
  <div class="a" style="left:16px;top:334.3px;width:190.7px;height:0.8px;background:#efefef;"></div>
  <!-- info icon -->
  <svg style="left:196px;top:131.800px" width="9" height="9" viewBox="0 0 9 9"><circle cx="4.5" cy="4.5" r="4.1" fill="none" stroke="#484848" stroke-width="0.8"/><rect x="4.15" y="3.9" width="0.7" height="2.6" fill="#555"/><rect x="4.15" y="2.5" width="0.7" height="0.8" fill="#555"/></svg>
  <!-- article thumb 1 -->
  <div class="a" style="left:15.8px;top:293.7px;width:39.6px;height:26.8px;background:linear-gradient(180deg,#8a4e2c 0.00px,#8a4e2c 0.95px,#ee9a32 1.20px,#ee9a32 2.05px,#4a3540 2.30px,#4a3540 3.75px,#756a66 4.00px,#756a66 4.95px,#4e3a42 5.20px,#4e3a42 5.85px,#f0a030 6.10px,#f0a030 7.55px,#57454e 7.80px,#57454e 9.25px,#857a70 9.50px,#857a70 12.25px,#f5a528 12.50px,#f5a528 14.35px,#8a8272 14.60px,#8a8272 20.25px,#3c2c32 20.50px,#3c2c32 21.25px,#f8a828 21.50px,#f8a828 23.25px,#8e887c 23.50px,#8e887c 26.55px);"></div>
  <div class="a" style="left:44.3px;top:293.7px;width:7.2px;height:19.5px;background:linear-gradient(180deg,#2e2a33,#3a3b3a 60%,#4a4640);opacity:.82"></div>
  <div class="a" style="left:15.8px;top:293.7px;width:39.6px;height:26.8px;background:rgba(95,60,55,.22);"></div>
  <div class="a" style="left:36.5px;top:296px;width:4px;height:4.5px;background:#c98a40;opacity:.8;border-radius:2px"></div>
  <!-- thumb 2 faded -->
  <div class="a" style="left:15.8px;top:343.5px;width:39.8px;height:16px;background:linear-gradient(180deg,#e6e4e1,#f6f5f4 70%,#fff);"></div>
  <div class="a" style="left:18.5px;top:345px;width:7px;height:15px;border-radius:3px 3px 0 0;background:#bdbdbd;"></div>
  <div class="a" style="left:26.5px;top:346px;width:5px;height:14px;border-radius:2.5px 2.5px 0 0;background:#c9c9c9;"></div>
  <div class="a" style="left:38px;top:345px;width:5px;height:15px;border-radius:2.5px 2.5px 0 0;background:#bdbdbd;"></div>
  <div class="a" style="left:45px;top:346px;width:6px;height:14px;border-radius:3px 3px 0 0;background:#c4c4c4;"></div>
  <!-- fade -->
  <div class="a" style="left:0;top:338px;width:100%;height:30px;background:linear-gradient(180deg,rgba(255,255,255,0) 0,rgba(255,255,255,.85) 55%,#fff 75%);"></div>
</div>
<div class="tx">
<span class="t" style="font-size:8.3px;color:#585858;top:104px;left:527.50px;transform:scaleX(0.9100);">channels to grow brand awareness, scaling</span>
<span class="t" style="font-size:8.3px;color:#585858;top:114px;left:527.50px;transform:scaleX(0.9277);">internationally</span>
<span class="t" style="font-size:8.3px;color:#585858;top:124px;left:527.50px;transform:scaleX(0.9303);">• Worked cross-functionally with 5+ business</span>
<span class="t" style="font-size:8.3px;color:#585858;top:135px;left:527.50px;transform:scaleX(0.9348);">partners to ensure brand compliance for 9</span>
<span class="t" style="font-size:8.3px;color:#585858;top:145px;left:527.50px;transform:scaleX(0.9313);">quarterly initiatives</span>
<span class="t" style="font-size:8.3px;color:#2b579a;top:157px;left:527.50px;transform:scaleX(0.9014);">Read more</span>
<span class="t" style="font-size:9.3px;color:#2b579a;top:189px;left:575.00px;transform:scaleX(0.9554);">See more examples</span>
<span class="t" style="font-size:9.3px;color:#2a2a2a;top:229px;-webkit-text-stroke:0.15px #2a2a2a;left:519.40px;transform:scaleX(0.9777);">Top skills for Senior Brand Manager</span>
<span class="t" style="font-size:9.3px;color:#616161;top:252px;left:519.40px;transform:scaleX(0.9797);">Brand Management · Advertising · Marketing ·</span>
<span class="t" style="font-size:9.3px;color:#616161;top:273px;left:519.40px;transform:scaleX(0.9831);">Digital Marketing · Integrated Marketing ·</span>
<span class="t" style="font-size:9.3px;color:#616161;top:294px;left:519.40px;transform:scaleX(0.9666);">Marketing Strategy · Social Media Marketing ·</span>
<span class="t" style="font-size:9.3px;color:#616161;top:315px;left:519.40px;transform:scaleX(0.9717);">Brand Development · Online Advertising ·</span>
<span class="t" style="font-size:9.3px;color:#616161;top:336px;left:519.40px;transform:scaleX(0.9181);">Market Research</span>
<span class="t" style="font-size:9.3px;color:#2a2a2a;top:367px;-webkit-text-stroke:0.15px #2a2a2a;left:519.40px;transform:scaleX(0.9894);">Articles to help write your resume</span>
<span class="t" style="font-size:9.3px;color:#333;top:390px;left:563.60px;transform:scaleX(0.9855);">Top 11 Resume Tips for Helping</span>
<span class="t" style="font-size:9.3px;color:#333;top:400px;left:563.60px;transform:scaleX(0.9658);">You Land Your Dream Job</span>
<span class="t" style="font-size:7.6px;color:#666;top:411px;left:563.60px;transform:scaleX(1.0122);">Suzie Roberton</span>
<span class="t" style="font-size:9.3px;color:#c9c9c9;top:440px;left:563.60px;transform:scaleX(0.9674);">3 Steps to Help Your Resume Stand</span>
<span class="t" style="font-size:9.3px;color:#f5f5f5;top:450px;left:563.60px;transform:scaleX(0.9333);">Out</span>
</div>
<div class="a" style="left:504px;top:96.2px;width:222.5px;height:8px;background:#fdfdfd;"></div>
<div class="a" style="left:510.7px;top:104px;width:207.7px;height:0.8px;background:#e2e2e2;"></div>

</body></html>
